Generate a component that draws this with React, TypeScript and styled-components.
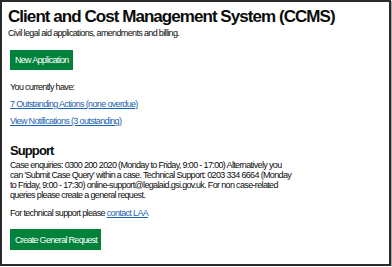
import { FC } from "react";
import styled, { createGlobalStyle } from "styled-components";

const GlobalStyle = createGlobalStyle`
  html, body {
    margin: 0;
    padding: 0;
    background: #ffffff;
  }
  body {
    font-family: "Liberation Sans", Arial, sans-serif;
    color: #0b0c0c;
  }
`;

const Frame = styled.div`
  box-sizing: border-box;
  width: 391px;
  height: 266px;
  border: 2px solid #2b2b2b;
  box-shadow: 1px 1px 0 #a8a8a8;
  padding: 4px 6px 0 6px;
  overflow: hidden;
`;

const Title = styled.h1`
  margin: 0;
  font-size: 17px;
  line-height: 22px;
  font-weight: 700;
  letter-spacing: -0.95px;
`;

const Lead = styled.p`
  margin: 0;
  font-size: 9px;
  line-height: 11px;
  letter-spacing: -0.65px;
`;

const Section = styled.div`
  padding-left: 2px;
`;

const ButtonRow = styled.div<{ $top: number }>`
  display: flex;
  margin-top: ${(p) => p.$top}px;
`;

const GreenButton = styled.button<{ $h: number }>`
  display: flex;
  align-items: center;
  box-sizing: border-box;
  height: ${(p) => p.$h}px;
  padding: 0 4px 0 5px;
  border: none;
  border-radius: 0;
  background: #00823b;
  color: #ffffff;
  font-family: "Liberation Sans", Arial, sans-serif;
  font-size: 9px;
  letter-spacing: -0.7px;
  cursor: pointer;
`;

const Text = styled.p<{ $top?: number }>`
  margin: ${(p) => p.$top ?? 0}px 0 0 0;
  font-size: 9px;
  line-height: 10px;
  letter-spacing: -0.65px;
  max-width: 282px;
`;

const Link = styled.a`
  color: #1d63b0;
  text-decoration: underline;
`;

const SubHeading = styled.h2`
  margin: 17px 0 0 0;
  font-size: 13px;
  line-height: 16px;
  font-weight: 700;
  letter-spacing: -0.9px;
`;

const App: FC = () => {
  return (
    <>
      <GlobalStyle />
      <Frame>
        <Title>Client and Cost Management System (CCMS)</Title>
        <Lead>Civil legal aid applications, amendments and billing.</Lead>
        <Section>
          <ButtonRow $top={11}>
            <GreenButton $h={20}>New Application</GreenButton>
          </ButtonRow>
          <Text $top={12}>You currently have:</Text>
          <Text $top={7}>
            <Link href="#">7 Outstanding Actions (none overdue)</Link>
          </Text>
          <Text $top={7}>
            <Link href="#">View Notifications (3 outstanding)</Link>
          </Text>
          <SubHeading>Support</SubHeading>
          <Text $top={1}>
            Case enquiries: 0300 200 2020 (Monday to Friday, 9:00 - 17:00)
            Alternatively you can 'Submit Case Query' within a case. Technical
            Support: 0203 334 6664 (Monday to Friday, 9:00 - 17:30)
            online-support@legalaid.gsi.gov.uk. For non case-related queries
            please create a general request.
          </Text>
          <Text $top={8}>
            For technical support please <Link href="#">contact LAA</Link>
          </Text>
          <ButtonRow $top={11}>
            <GreenButton $h={21}>Create General Request</GreenButton>
          </ButtonRow>
        </Section>
      </Frame>
    </>
  );
};

export default App;
